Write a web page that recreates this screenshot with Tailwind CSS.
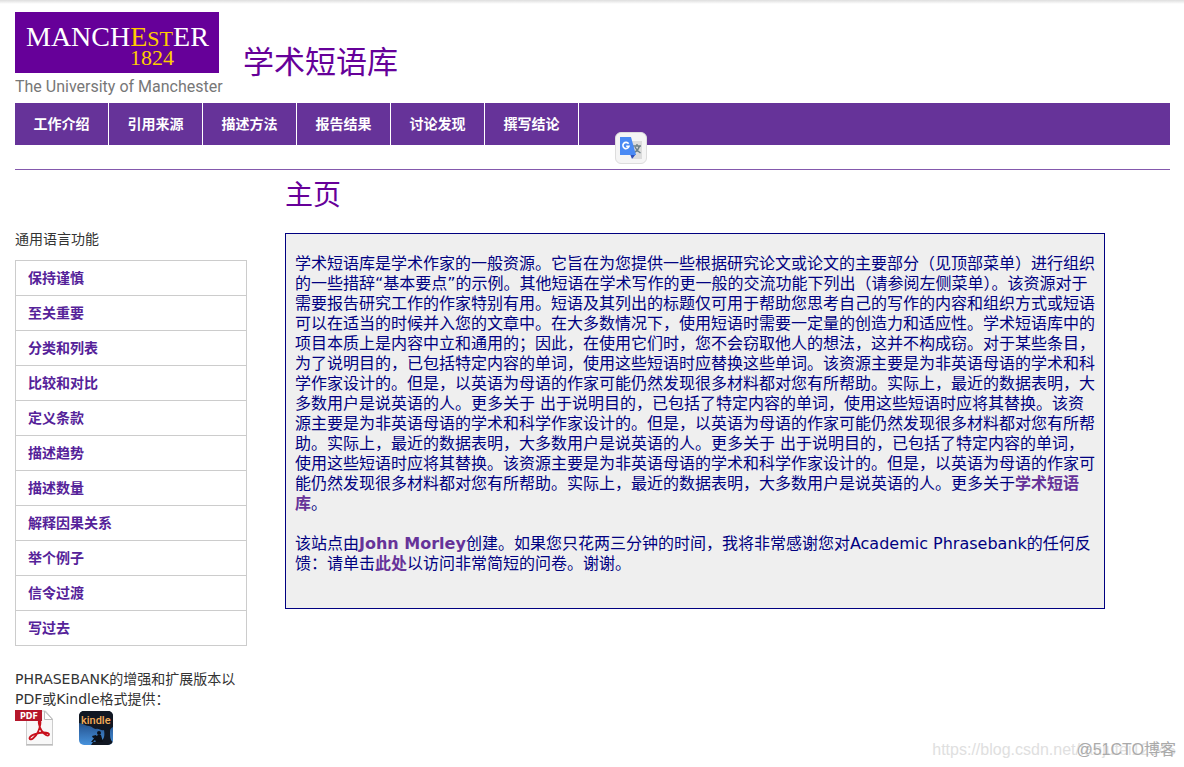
<!DOCTYPE html>
<html lang="zh-CN">
<head>
<meta charset="utf-8">
<meta name="viewport" content="width=device-width, initial-scale=1">
<title>学术短语库</title>
<script src="https://cdn.jsdelivr.net/npm/@tailwindcss/browser@4"></script>
</head>
<body class="relative min-h-screen bg-white font-['DejaVu_Sans','Noto_Sans_CJK_SC',sans-serif] text-sm text-[#333]">
<div class="absolute inset-x-0 top-0 h-1 bg-linear-to-b from-[#dedede] to-white"></div>

<header class="pt-3 pr-[14px] pl-[15px]">
  <div class="flex h-[91px] items-start gap-[18px]">
    <a href="#" aria-label="The University of Manchester">
      <svg width="210" height="88" viewBox="0 0 210 88">
        <rect width="204" height="61" fill="#609"/>
        <g font-family="Liberation Serif, serif">
          <text x="11" y="34" font-size="28" fill="#fff">MANCH<tspan fill="#fc0">E</tspan><tspan fill="#fc0" font-size="22">ST</tspan>ER</text>
          <text x="115" y="53" font-size="22" fill="#fc0">1824</text>
        </g>
        <text x="0" y="80" font-family="Roboto, sans-serif" font-size="16" fill="#777">The University of Manchester</text>
      </svg>
    </a>
    <h1 class="pt-[34px] text-[31px] leading-8 font-normal text-[#609]">学术短语库</h1>
  </div>
  <nav class="relative h-[42px] bg-[#639]">
    <ul class="flex h-full font-bold text-white">
      <li class="w-[94px] border-r border-white"><a href="#" class="flex h-full items-center justify-center">工作介绍</a></li>
      <li class="w-[94px] border-r border-white"><a href="#" class="flex h-full items-center justify-center">引用来源</a></li>
      <li class="w-[94px] border-r border-white"><a href="#" class="flex h-full items-center justify-center">描述方法</a></li>
      <li class="w-[94px] border-r border-white"><a href="#" class="flex h-full items-center justify-center">报告结果</a></li>
      <li class="w-[94px] border-r border-white"><a href="#" class="flex h-full items-center justify-center">讨论发现</a></li>
      <li class="w-[94px] border-r border-white"><a href="#" class="flex h-full items-center justify-center">撰写结论</a></li>
    </ul>
    <button type="button" aria-label="翻译" class="absolute top-[29px] left-[600px] flex size-8 items-center justify-center rounded-md border border-[#ddd] bg-[#f5f5f5]">
      <svg class="shrink-0" width="24" height="24" viewBox="0 0 24 24">
        <path d="M10 5h13v18H14z" fill="#dcdcdc"/>
        <path d="M14 10h8M18 8v2M20.500 10c-.8 3-2.500 5-5 6.500M16 11c1 2.500 3 4.500 5.500 6" fill="none" stroke="#6b7f86" stroke-width="1.400"/>
        <path d="M11 18h6l-4 5z" fill="#3050b8"/>
        <path d="M1 1h11l5 18H1z" fill="#4a8af4"/>
        <path d="M9.600 7.800A3.100 3.100 0 1 0 10 10.300H7.200" fill="none" stroke="#fff" stroke-width="1.600"/>
      </svg>
    </button>
  </nav>
  <hr class="mt-6 h-px border-0 bg-[#8459ad]">
</header>

<div class="flex gap-[38px] px-[15px]">
  <aside class="w-[232px] shrink-0 pt-[59px]">
    <h2 class="leading-5">通用语言功能</h2>
    <ul class="mt-[11px] border border-b-0 border-[#ccc] font-bold text-[#529]">
      <li><a href="#" class="flex h-[35px] items-center border-b border-[#ccc] px-3">保持谨慎</a></li>
      <li><a href="#" class="flex h-[35px] items-center border-b border-[#ccc] px-3">至关重要</a></li>
      <li><a href="#" class="flex h-[35px] items-center border-b border-[#ccc] px-3">分类和列表</a></li>
      <li><a href="#" class="flex h-[35px] items-center border-b border-[#ccc] px-3">比较和对比</a></li>
      <li><a href="#" class="flex h-[35px] items-center border-b border-[#ccc] px-3">定义条款</a></li>
      <li><a href="#" class="flex h-[35px] items-center border-b border-[#ccc] px-3">描述趋势</a></li>
      <li><a href="#" class="flex h-[35px] items-center border-b border-[#ccc] px-3">描述数量</a></li>
      <li><a href="#" class="flex h-[35px] items-center border-b border-[#ccc] px-3">解释因果关系</a></li>
      <li><a href="#" class="flex h-[35px] items-center border-b border-[#ccc] px-3">举个例子</a></li>
      <li><a href="#" class="flex h-[35px] items-center border-b border-[#ccc] px-3">信令过渡</a></li>
      <li><a href="#" class="flex h-[35px] items-center border-b border-[#ccc] px-3">写过去</a></li>
    </ul>
    <p class="mt-[23px] leading-5">PHRASEBANK的增强和扩展版本以PDF或Kindle格式提供：</p>
    <div class="flex items-start gap-[26px] pt-px">
      <a href="#" aria-label="PDF">
        <svg width="38" height="36" viewBox="0 0 38 36">
          <path d="M11.500 1h19l7 8v25.500h-26z" fill="#f8f8f8" stroke="#ccc"/>
          <path d="M11 35h27" stroke="#aaa"/>
          <path d="M29.500 1v8.500h8z" fill="#fff" stroke="#bbb"/>
          <path d="M14.500 28.500c0-3 8-6 14-6 4 0 6 1 5.500 2.300-.8 2-5-.3-7.500-4.300-2.700-4.200-3.500-10-2-10 1.700 0 1 6-1.500 11.500-2.500 5-7.500 9.500-8.500 6.500z" fill="none" stroke="#c8101c" stroke-width="1.800"/>
          <rect width="27" height="11" fill="#b5172b"/>
          <text x="5" y="9" font-family="DejaVu Sans, sans-serif" font-size="8" font-weight="700" fill="#fff">PDF</text>
        </svg>
      </a>
      <a href="#" aria-label="Kindle" class="pt-px">
        <svg width="34" height="34" viewBox="0 0 34 34">
          <defs>
            <linearGradient id="sky" x2="0" y2="1"><stop stop-color="#152030"/><stop offset=".5" stop-color="#2c609f"/><stop offset="1" stop-color="#4792dc"/></linearGradient>
            <clipPath id="tile"><rect width="34" height="34" rx="5"/></clipPath>
          </defs>
          <g clip-path="url(#tile)">
            <rect width="34" height="34" fill="url(#sky)"/>
            <path d="M0 0h34v16c-2 1-3 2-3 4 0 5 0 9 3 11v3H12l2-3 8-1c3-2 4-5 3-11-3 1-5-2-8-1-3 0-4-3-7-3-4 0-6-3-10-3z" fill="#111722"/>
            <circle cx="20" cy="22" r="2" fill="#0c1018"/>
            <path d="M19 24h3l2 7h-7l-1-2-2 2h-2l4-5zM13 25l4-1 1 2-4 1z" fill="#0c1018"/>
          </g>
          <text x="2" y="13" font-family="Roboto, sans-serif" font-size="11" font-weight="500" fill="#f3ad58">kindle</text>
        </svg>
      </a>
    </div>
  </aside>

  <main class="min-w-0 flex-1 pr-[64px]">
    <h2 class="pt-[10px] text-[28px] leading-8 font-normal text-[#609]">主页</h2>
    <section class="mt-[21px] border border-[#000080] bg-[#efefef] px-[9px] pt-5 pb-[34px] text-base leading-5 text-[#000080]">
      <p>学术短语库是学术作家的一般资源。它旨在为您提供一些根据研究论文或论文的主要部分（见顶部菜单）进行组织的一些措辞“基本要点”的示例。其他短语在学术写作的更一般的交流功能下列出（请参阅左侧菜单）。该资源对于需要报告研究工作的作家特别有用。短语及其列出的标题仅可用于帮助您思考自己的写作的内容和组织方式或短语可以在适当的时候并入您的文章中。在大多数情况下，使用短语时需要一定量的创造力和适应性。学术短语库中的项目本质上是内容中立和通用的；因此，在使用它们时，您不会窃取他人的想法，这并不构成窃。对于某些条目，为了说明目的，已包括特定内容的单词，使用这些短语时应替换这些单词。该资源主要是为非英语母语的学术和科学作家设计的。但是，以英语为母语的作家可能仍然发现很多材料都对您有所帮助。实际上，最近的数据表明，大多数用户是说英语的人。更多关于 出于说明目的，已包括了特定内容的单词，使用这些短语时应将其替换。该资源主要是为非英语母语的学术和科学作家设计的。但是，以英语为母语的作家可能仍然发现很多材料都对您有所帮助。实际上，最近的数据表明，大多数用户是说英语的人。更多关于 出于说明目的，已包括了特定内容的单词，使用这些短语时应将其替换。该资源主要是为非英语母语的学术和科学作家设计的。但是，以英语为母语的作家可能仍然发现很多材料都对您有所帮助。实际上，最近的数据表明，大多数用户是说英语的人。更多关于<a href="#" class="font-bold text-[#639]">学术短语库</a>。</p>
      <p class="mt-5">该站点由<a href="#" class="font-bold text-[#639]">John Morley</a>创建。如果您只花两三分钟的时间，我将非常感谢您对Academic Phrasebank的任何反馈：请单击<a href="#" class="font-bold text-[#639]">此处</a>以访问非常简短的问卷。谢谢。</p>
    </section>
  </main>
</div>

<div class="absolute right-2 bottom-[7px] font-['Liberation_Sans','Noto_Sans_CJK_SC',sans-serif] text-base leading-5 whitespace-nowrap">
  <span class="text-[#e0e0e0]">https://blog.csdn.net/fanjufei12345</span>
  <span class="absolute right-0 bottom-0 text-[#aaa]">@51CTO博客</span>
</div>
</body>
</html>
